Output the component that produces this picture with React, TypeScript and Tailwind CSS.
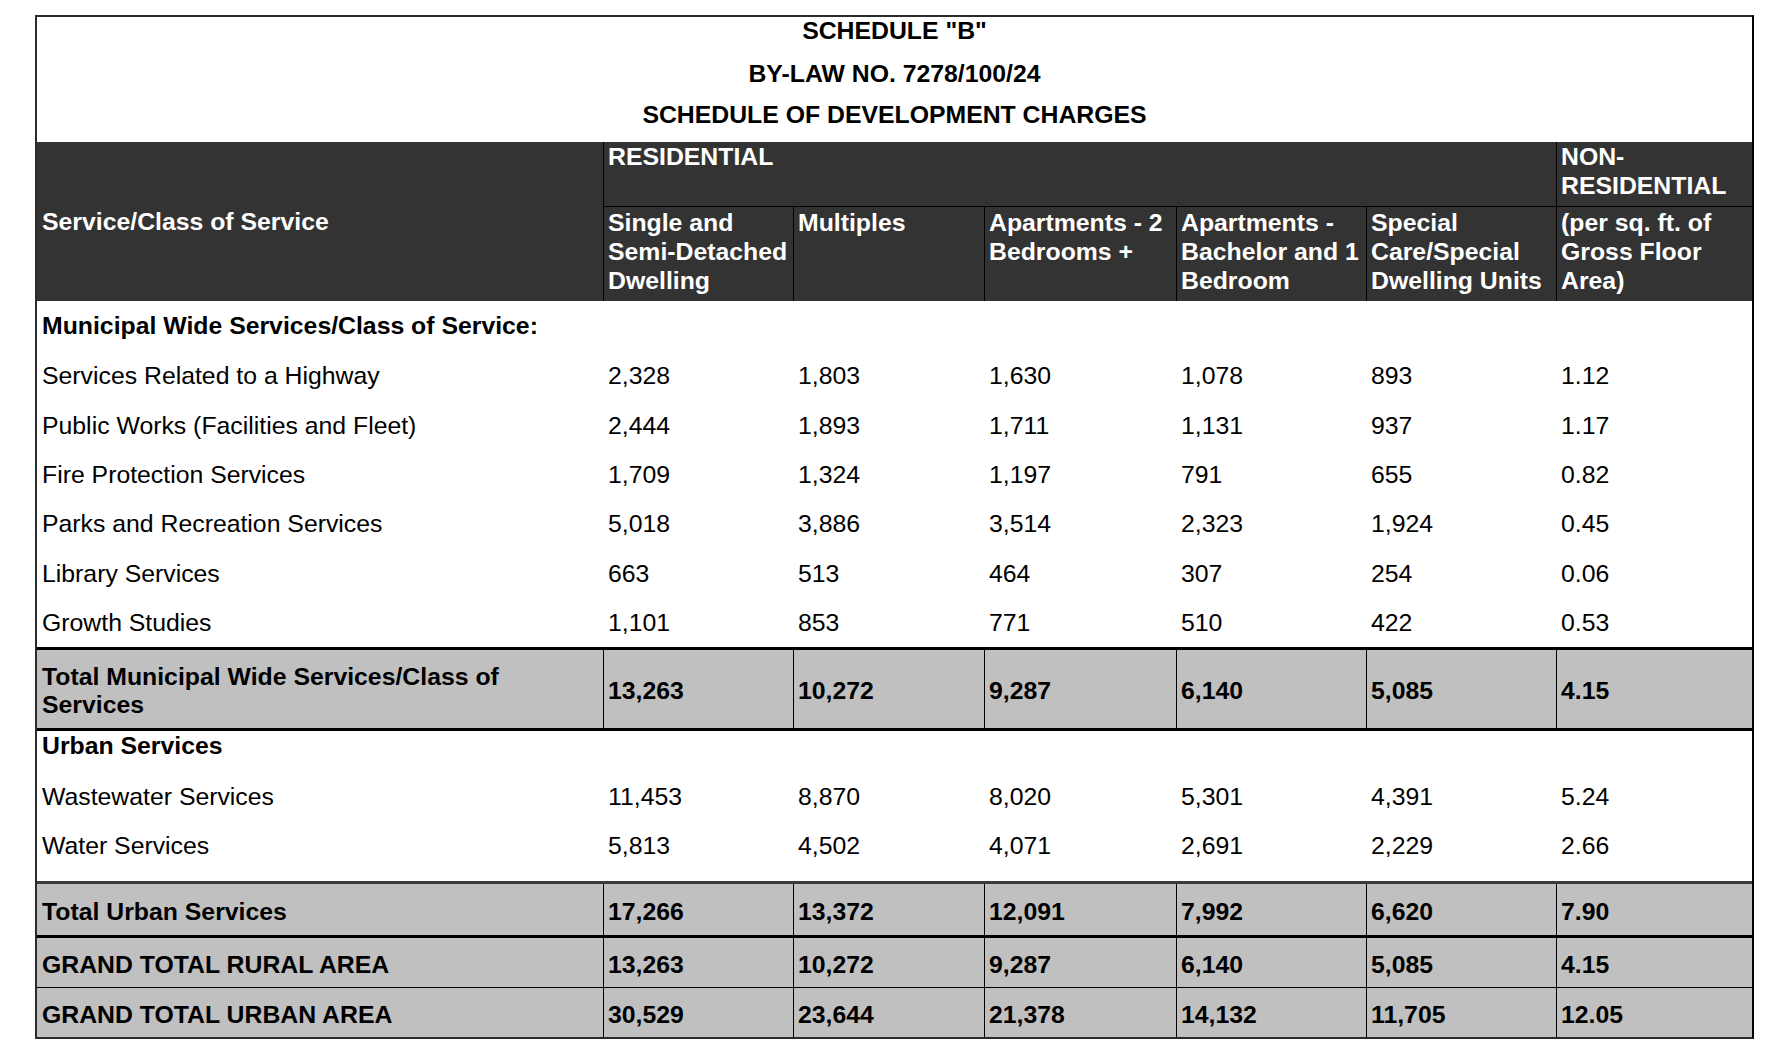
import React from "react";

const GRID = "grid grid-cols-[566px_190px_191px_192px_190px_190px_196px]";

const municipal: [string, string[], string][] = [
  ["Services Related to a Highway", ["2,328", "1,803", "1,630", "1,078", "893", "1.12"], "h-[50px]"],
  ["Public Works (Facilities and Fleet)", ["2,444", "1,893", "1,711", "1,131", "937", "1.17"], "h-[49px]"],
  ["Fire Protection Services", ["1,709", "1,324", "1,197", "791", "655", "0.82"], "h-[49px]"],
  ["Parks and Recreation Services", ["5,018", "3,886", "3,514", "2,323", "1,924", "0.45"], "h-[50px]"],
  ["Library Services", ["663", "513", "464", "307", "254", "0.06"], "h-[49px]"],
  ["Growth Studies", ["1,101", "853", "771", "510", "422", "0.53"], "h-[49px]"],
];

function DataRow({ label, values, h, extra = "" }: { label: string; values: string[]; h: string; extra?: string }) {
  return (
    <div className={`${GRID} ${h} ${extra}`}>
      <div className="flex items-center pl-[5px] whitespace-nowrap">{label}</div>
      {values.map((v, i) => (
        <div key={i} className="flex items-center pl-[5px] whitespace-nowrap">
          {v}
        </div>
      ))}
    </div>
  );
}

function TotalCells({ label, values }: { label: React.ReactNode; values: string[] }) {
  return (
    <>
      <div className="flex items-center pl-[5px] pt-[4px] whitespace-nowrap">{label}</div>
      {values.map((v, i) => (
        <div key={i} className="flex items-center border-l border-black pl-[4px] pt-[4px] whitespace-nowrap">
          {v}
        </div>
      ))}
    </>
  );
}

export default function App() {
  return (
    <div className="min-h-screen w-full bg-white pt-[15px] pl-[35px]">
      <div
        className="w-[1719px] border-2 border-[#2b2b2b] border-r-black text-black text-[24.8px] leading-[28px]"
        style={{ fontFamily: '"Liberation Sans", Arial, Helvetica, sans-serif' }}
      >
        {/* Title */}
        <div className="h-[125px] flex flex-col items-center font-bold">
          <div>SCHEDULE "B"</div>
          <div className="mt-[15px]">BY-LAW NO. 7278/100/24</div>
          <div className="mt-[13px]">SCHEDULE OF DEVELOPMENT CHARGES</div>
        </div>

        {/* Header */}
        <div className={`${GRID} grid-rows-[65px_94px] bg-[#333333] text-white font-bold leading-[29px]`}>
          <div className="row-span-2 flex items-center pl-[5px]">Service/Class of Service</div>
          <div className="col-span-5 border-l border-b border-black pl-[4px]">RESIDENTIAL</div>
          <div className="border-l border-b border-black pl-[4px]">
            NON-
            <br />
            RESIDENTIAL
          </div>
          <div className="border-l border-black pl-[4px] pt-[1px]">
            Single and
            <br />
            Semi-Detached
            <br />
            Dwelling
          </div>
          <div className="border-l border-black pl-[4px] pt-[1px]">Multiples</div>
          <div className="border-l border-black pl-[4px] pt-[1px] whitespace-nowrap">
            Apartments - 2
            <br />
            Bedrooms +
          </div>
          <div className="border-l border-black pl-[4px] pt-[1px] whitespace-nowrap">
            Apartments -
            <br />
            Bachelor and 1
            <br />
            Bedroom
          </div>
          <div className="border-l border-black pl-[4px] pt-[1px] whitespace-nowrap">
            Special
            <br />
            Care/Special
            <br />
            Dwelling Units
          </div>
          <div className="border-l border-black pl-[4px] pt-[1px] whitespace-nowrap">
            (per sq. ft. of
            <br />
            Gross Floor
            <br />
            Area)
          </div>
        </div>

        {/* Municipal wide */}
        <div className="h-[50px] flex items-center pl-[5px] font-bold">Municipal Wide Services/Class of Service:</div>
        {municipal.map(([label, values, h]) => (
          <DataRow key={label} label={label} values={values} h={h} />
        ))}

        <div className={`${GRID} h-[84px] border-y-[3px] border-black bg-[#c0c0c0] font-bold`}>
          <TotalCells
            label={
              <span className="leading-[28px]">
                Total Municipal Wide Services/Class of
                <br />
                Services
              </span>
            }
            values={["13,263", "10,272", "9,287", "6,140", "5,085", "4.15"]}
          />
        </div>

        {/* Urban */}
        <div className="h-[41px] pt-[1px] pl-[5px] font-bold">Urban Services</div>
        <DataRow label="Wastewater Services" values={["11,453", "8,870", "8,020", "5,301", "4,391", "5.24"]} h="h-[49px]" />
        <DataRow label="Water Services" values={["5,813", "4,502", "4,071", "2,691", "2,229", "2.66"]} h="h-[60px]" extra="pb-[10px]" />

        <div className={`${GRID} h-[57px] border-t-[3px] border-t-[#3a3a3a] border-b-[3px] border-b-black bg-[#c0c0c0] font-bold`}>
          <TotalCells label="Total Urban Services" values={["17,266", "13,372", "12,091", "7,992", "6,620", "7.90"]} />
        </div>
        <div className={`${GRID} h-[50px] border-b border-black bg-[#c0c0c0] font-bold`}>
          <TotalCells label="GRAND TOTAL RURAL AREA" values={["13,263", "10,272", "9,287", "6,140", "5,085", "4.15"]} />
        </div>
        <div className={`${GRID} h-[49px] bg-[#c0c0c0] font-bold`}>
          <TotalCells label="GRAND TOTAL URBAN AREA" values={["30,529", "23,644", "21,378", "14,132", "11,705", "12.05"]} />
        </div>
      </div>
    </div>
  );
}
